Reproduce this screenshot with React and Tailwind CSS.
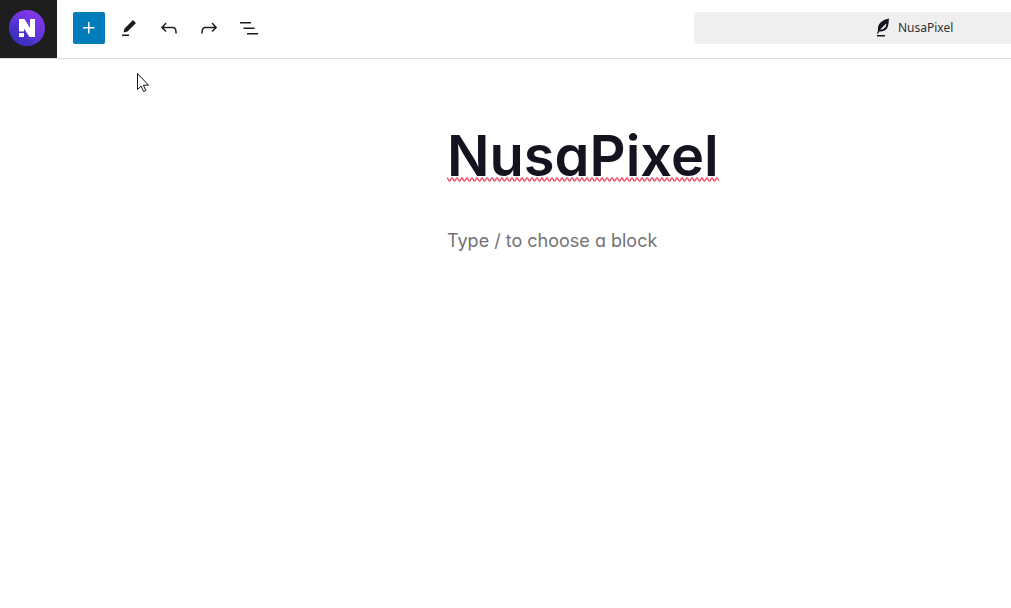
import React, { useState } from 'react';

const tools = [
  {
    label: 'Tools',
    path: 'm19 7-3-3-8.5 8.5-1 4 4-1L19 7Zm-7 11.5H5V20h7v-1.5Z',
  },
  {
    label: 'Undo',
    path: 'M18.3 11.7c-.6-.6-1.4-.9-2.3-.9H6.7l2.9-3.3-1.1-1-4.5 5L8.5 16l1-1-2.7-2.7H16c.5 0 .9.2 1.3.5 1 1 1 3.4 1 4.5v.3h1.5v-.2c0-1.5 0-4.3-1.5-5.7z',
  },
  {
    label: 'Redo',
    path: 'M15.6 6.5l-1.1 1 2.9 3.3H8c-.9 0-1.7.3-2.3.9-1.4 1.5-1.4 4.2-1.4 5.6v.2h1.5v-.3c0-1.1 0-3.5 1-4.5.3-.3.7-.5 1.3-.5h9.2L14.5 15l1.1 1.1 4.6-4.6-4.6-5z',
  },
  {
    label: 'Document Overview',
    path: 'M3 6h11v1.5H3V6Zm3.5 5.5h11V13h-11v-1.5ZM21 17H10v1.5h11V17Z',
  },
];

function SiteLogo() {
  return (
    <svg width="36" height="36" viewBox="0 0 36 36" aria-hidden="true">
      <defs>
        <linearGradient id="logo-bg" x1="0.8" y1="0.1" x2="0.3" y2="0.95">
          <stop offset="0" stopColor="#8437ea" />
          <stop offset="0.5" stopColor="#6635dc" />
          <stop offset="1" stopColor="#3a30b8" />
        </linearGradient>
        <clipPath id="logo-clip">
          <circle cx="18" cy="18" r="18" />
        </clipPath>
      </defs>
      <g clipPath="url(#logo-clip)">
        <rect width="36" height="36" fill="url(#logo-bg)" />
        <path d="M0 21 9 9l9 18 8 10H0Z" fill="#3930c0" opacity="0.45" />
      </g>
      <path d="M10 9h5.500L21 18V9h5v18h-5.500L15 18.500V21.500h-5Z" fill="#fff" />
      <path d="M10 23h5v4h-5Z" fill="#fff" />
    </svg>
  );
}

function FeatherIcon() {
  return (
    <svg width="14" height="20" viewBox="0 0 14 20" aria-hidden="true">
      <path
        fillRule="evenodd"
        d="M13 .5C8 1.500 3.500 4 2.200 8.500c-.4 1.500-.3 3-.2 4.200L1 15.500l1.200.3.900-2.300c3.800.3 7-.8 8.400-4C12.700 6.800 12.700 3 13 .5ZM4 11.800 10.200 5.500c.4 3.500-2.200 6-6.200 6.300Z"
        fill="#14131f"
      />
      <path d="M1 17h8v1.500H1Z" fill="#14131f" />
    </svg>
  );
}

function Squiggle() {
  return (
    <svg
      className="pointer-events-none absolute bottom-[7px] left-0 w-full"
      height="5"
      aria-hidden="true"
    >
      <defs>
        <pattern id="squiggle" width="5" height="5" patternUnits="userSpaceOnUse">
          <path
            d="M-1.250 2.500Q0-.5 1.250 2.500T3.750 2.500T6.250 2.500"
            fill="none"
            stroke="#ec4a5e"
            strokeWidth="1.400"
          />
        </pattern>
      </defs>
      <rect width="100%" height="5" fill="url(#squiggle)" />
    </svg>
  );
}

function MousePointer() {
  return (
    <svg
      className="pointer-events-none absolute left-[137px] top-[73px]"
      width="13"
      height="20"
      viewBox="0 0 13 20"
      aria-hidden="true"
    >
      <path
        d="M.5.5v16l3.600-3.500 2.500 5.500 2.200-1-2.400-5.300h5.100Z"
        fill="#fff"
        stroke="#14131f"
      />
    </svg>
  );
}

function EditorHeader() {
  return (
    <header className="flex h-[59px] border-b border-[#dddddd] bg-white">
      <a
        href="#dashboard"
        aria-label="View Posts"
        className="flex w-[57px] shrink-0 items-center justify-center bg-[#1e1e1e] pb-0.5 pr-1"
      >
        <SiteLogo />
      </a>
      <div className="flex flex-1 items-center pb-0.5 pl-4">
        <div className="flex gap-2">
          <button
            aria-label="Toggle block inserter"
            className="flex size-8 items-center justify-center rounded-xs bg-[#007cba] text-white"
          >
            <svg width="24" height="24" viewBox="0 0 24 24" fill="currentColor">
              <path d="M11 12.5V17.5H12.5V12.5H17.5V11H12.5V6H11V11H6V12.5H11Z" />
            </svg>
          </button>
          {tools.map((tool) => (
            <button
              key={tool.label}
              aria-label={tool.label}
              className="flex size-8 items-center justify-center rounded-xs text-[#1e1a20]"
            >
              <svg width="24" height="24" viewBox="0 0 24 24" fill="currentColor">
                <path d={tool.path} />
              </svg>
            </button>
          ))}
        </div>
        <button className="ml-[429px] flex h-8 flex-1 items-center gap-2 rounded-l bg-[#efefef] pl-[182px] font-['Noto_Sans',sans-serif] text-xs text-[#2f2f33]">
          <FeatherIcon />
          NusaPixel
        </button>
      </div>
    </header>
  );
}

function App() {
  const [block, setBlock] = useState('');

  return (
    <div className="relative min-h-screen bg-white">
      <EditorHeader />
      <main className="flex flex-col items-start gap-[38px] pl-[447px] pt-16 font-[Inter,sans-serif] [font-feature-settings:'cv11']">
        <div className="relative">
          <h1
            contentEditable
            suppressContentEditableWarning
            spellCheck={false}
            aria-label="Add title"
            className="text-[56px] font-semibold leading-[66px] text-[#14131f] outline-none"
          >
            NusaPixel
          </h1>
          <Squiggle />
        </div>
        <input
          type="text"
          aria-label="Add default block"
          placeholder="Type / to choose a block"
          value={block}
          onChange={(e) => setBlock(e.target.value)}
          className="w-full text-lg text-[#14131f] outline-none placeholder:text-[#727277]"
        />
      </main>
      <MousePointer />
    </div>
  );
}

export default App;
